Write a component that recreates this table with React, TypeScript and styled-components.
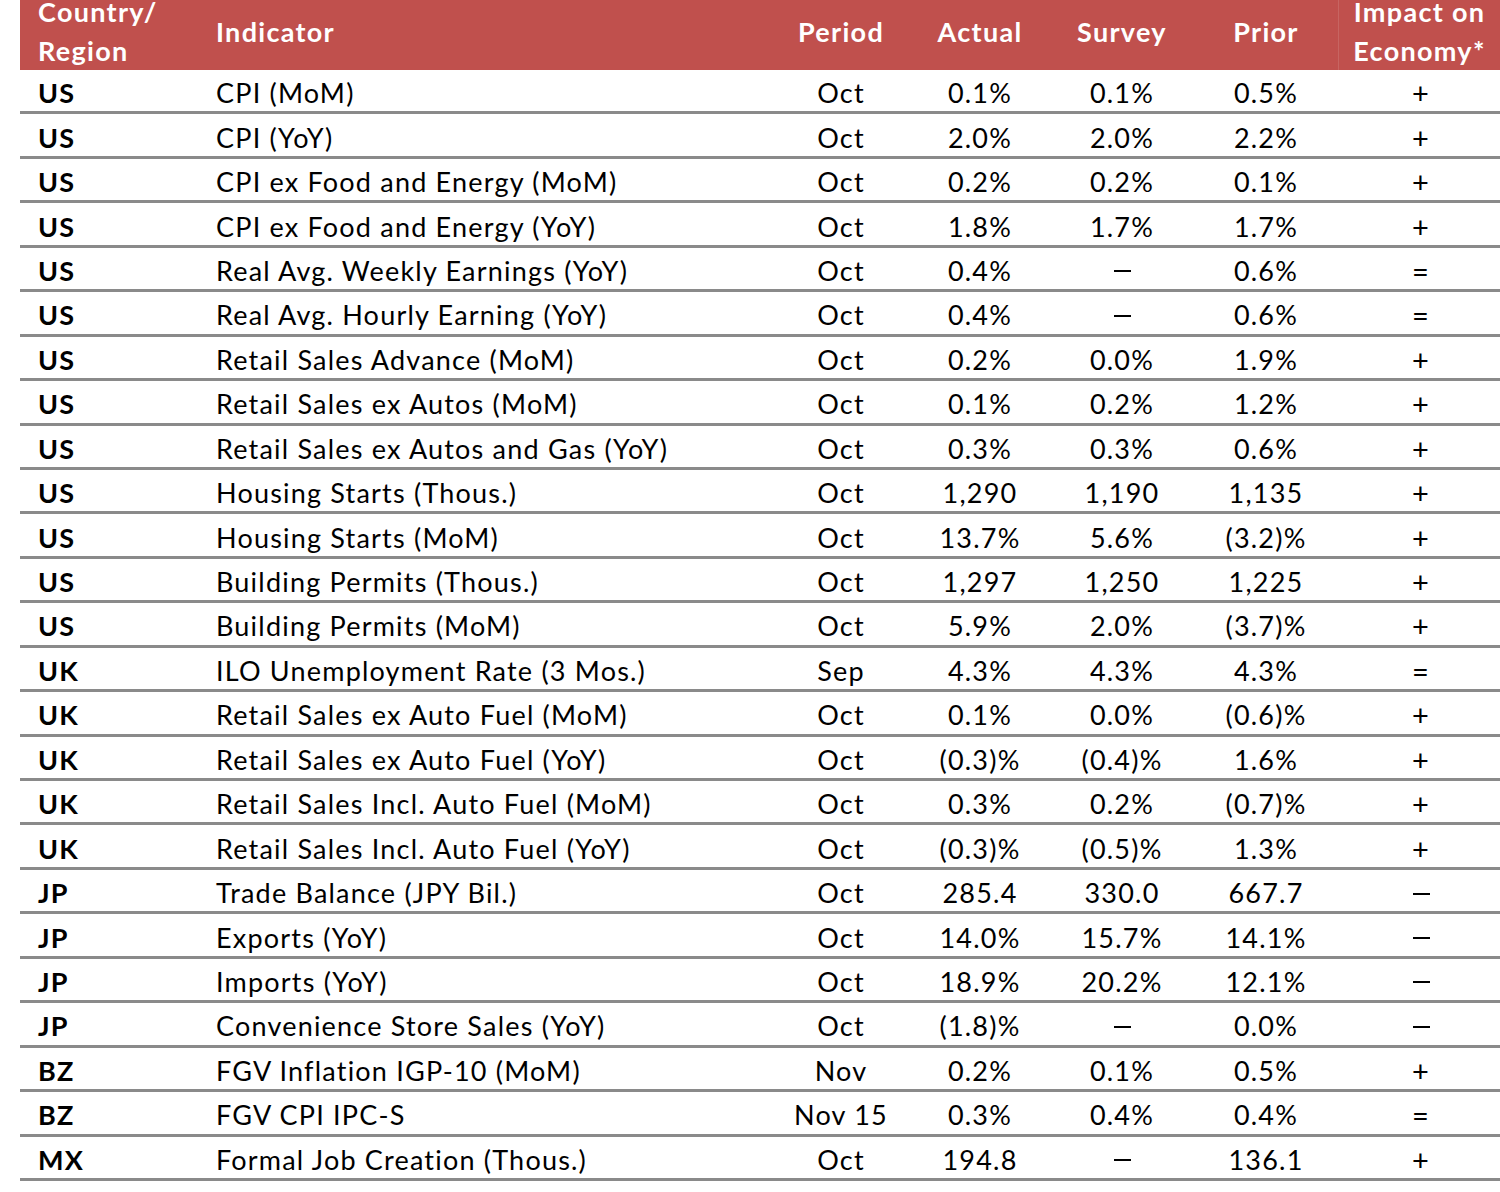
import React from "react";
import styled, { createGlobalStyle } from "styled-components";

const GlobalStyle = createGlobalStyle`
  html, body {
    margin: 0;
    padding: 0;
    background: #ffffff;
    overflow: hidden;
  }
  body {
    font-family: "Lato", "Open Sans", sans-serif;
  }
`;

const COLS = "178px 574px 138px 140px 144px 144px 1fr";

const Page = styled.div`
  width: 1500px;
  height: 1192px;
  overflow: hidden;
`;

const Table = styled.div`
  margin: -8px 0 0 20px;
  width: 1480px;
`;

const HeaderRow = styled.div`
  display: grid;
  grid-template-columns: ${COLS};
  height: 78px;
  background: #c0504d;
  color: #ffffff;
  font-weight: 700;
  font-size: 27px;
  letter-spacing: 1.3px;
  line-height: 39px;
`;

const HeadCell = styled.div<{ $align?: "left" | "center"; $divider?: boolean }>`
  display: flex;
  flex-direction: column;
  justify-content: center;
  align-items: ${(p) => (p.$align === "left" ? "flex-start" : "center")};
  box-sizing: border-box;
  padding-bottom: 5px;
  padding-left: ${(p) => (p.$align === "left" ? "18px" : "0")};
  border-left: ${(p) => (p.$divider ? "1px solid rgba(255,255,255,0.12)" : "none")};
  white-space: nowrap;
`;

const Row = styled.div`
  display: grid;
  grid-template-columns: ${COLS};
  height: 44.45px;
  box-sizing: border-box;
  border-bottom: 3px solid #8a8a8a;
  font-size: 27px;
  letter-spacing: 1.2px;
  color: #000000;
  padding-top: 4px;
`;

const Cell = styled.div<{ $align?: "left" | "center"; $bold?: boolean }>`
  display: flex;
  align-items: center;
  justify-content: ${(p) => (p.$align === "left" ? "flex-start" : "center")};
  padding-left: ${(p) => (p.$align === "left" ? "18px" : "0")};
  font-weight: ${(p) => (p.$bold ? 700 : 400)};
  white-space: nowrap;
`;

const Sign = styled(Cell)`
  font-size: 29px;
  padding-left: 4px;
`;

const Dash = styled.span`
  display: inline-block;
  width: 17px;
  height: 2px;
  margin-top: 2px;
  background: #000000;
`;

const Footnote = styled.div`
  margin: 6px 0 0 22px;
  font-size: 20px;
  color: #404040;
  white-space: nowrap;
`;

type Item = [string, string, string, string, string, string, string];

const rows: Item[] = [
  ["US", "CPI (MoM)", "Oct", "0.1%", "0.1%", "0.5%", "+"],
  ["US", "CPI (YoY)", "Oct", "2.0%", "2.0%", "2.2%", "+"],
  ["US", "CPI ex Food and Energy (MoM)", "Oct", "0.2%", "0.2%", "0.1%", "+"],
  ["US", "CPI ex Food and Energy (YoY)", "Oct", "1.8%", "1.7%", "1.7%", "+"],
  ["US", "Real Avg. Weekly Earnings (YoY)", "Oct", "0.4%", "–", "0.6%", "="],
  ["US", "Real Avg. Hourly Earning (YoY)", "Oct", "0.4%", "–", "0.6%", "="],
  ["US", "Retail Sales Advance (MoM)", "Oct", "0.2%", "0.0%", "1.9%", "+"],
  ["US", "Retail Sales ex Autos (MoM)", "Oct", "0.1%", "0.2%", "1.2%", "+"],
  ["US", "Retail Sales ex Autos and Gas (YoY)", "Oct", "0.3%", "0.3%", "0.6%", "+"],
  ["US", "Housing Starts (Thous.)", "Oct", "1,290", "1,190", "1,135", "+"],
  ["US", "Housing Starts (MoM)", "Oct", "13.7%", "5.6%", "(3.2)%", "+"],
  ["US", "Building Permits (Thous.)", "Oct", "1,297", "1,250", "1,225", "+"],
  ["US", "Building Permits (MoM)", "Oct", "5.9%", "2.0%", "(3.7)%", "+"],
  ["UK", "ILO Unemployment Rate (3 Mos.)", "Sep", "4.3%", "4.3%", "4.3%", "="],
  ["UK", "Retail Sales ex Auto Fuel (MoM)", "Oct", "0.1%", "0.0%", "(0.6)%", "+"],
  ["UK", "Retail Sales ex Auto Fuel (YoY)", "Oct", "(0.3)%", "(0.4)%", "1.6%", "+"],
  ["UK", "Retail Sales Incl. Auto Fuel (MoM)", "Oct", "0.3%", "0.2%", "(0.7)%", "+"],
  ["UK", "Retail Sales Incl. Auto Fuel (YoY)", "Oct", "(0.3)%", "(0.5)%", "1.3%", "+"],
  ["JP", "Trade Balance (JPY Bil.)", "Oct", "285.4", "330.0", "667.7", "–"],
  ["JP", "Exports (YoY)", "Oct", "14.0%", "15.7%", "14.1%", "–"],
  ["JP", "Imports (YoY)", "Oct", "18.9%", "20.2%", "12.1%", "–"],
  ["JP", "Convenience Store Sales (YoY)", "Oct", "(1.8)%", "–", "0.0%", "–"],
  ["BZ", "FGV Inflation IGP-10 (MoM)", "Nov", "0.2%", "0.1%", "0.5%", "+"],
  ["BZ", "FGV CPI IPC-S", "Nov 15", "0.3%", "0.4%", "0.4%", "="],
  ["MX", "Formal Job Creation (Thous.)", "Oct", "194.8", "–", "136.1", "+"],
];

const show = (v: string) => (v === "–" ? <Dash aria-label="–" /> : v);

const App: React.FC = () => {
  return (
    <Page>
      <GlobalStyle />
      <Table>
        <HeaderRow>
          <HeadCell $align="left">
            <span>Country/</span>
            <span>Region</span>
          </HeadCell>
          <HeadCell $align="left">Indicator</HeadCell>
          <HeadCell>Period</HeadCell>
          <HeadCell>Actual</HeadCell>
          <HeadCell>Survey</HeadCell>
          <HeadCell>Prior</HeadCell>
          <HeadCell $divider>
            <span>Impact on</span>
            <span>Economy*</span>
          </HeadCell>
        </HeaderRow>
        {rows.map((r, i) => (
          <Row key={i}>
            <Cell $align="left" $bold>
              {r[0]}
            </Cell>
            <Cell $align="left">{r[1]}</Cell>
            <Cell>{r[2]}</Cell>
            <Cell>{show(r[3])}</Cell>
            <Cell>{show(r[4])}</Cell>
            <Cell>{show(r[5])}</Cell>
            <Sign>{show(r[6])}</Sign>
          </Row>
        ))}
        <Footnote>
          * Markets and economic indicators are compared against the consensus survey; the impact reflects the change on the economy
        </Footnote>
      </Table>
    </Page>
  );
};

export default App;
